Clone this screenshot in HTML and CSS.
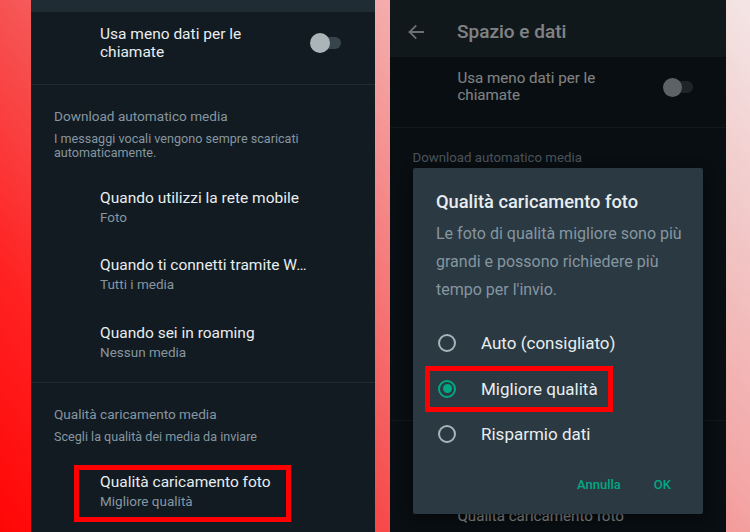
FILE: index.html
```html
<!DOCTYPE html>
<html lang="it">
<head>
<meta charset="utf-8">
<title>Spazio e dati</title>
<link rel="stylesheet" href="styles.css">
</head>
<body>
<div class="stage">
  <section class="phone phone-left">
    <div class="strip"></div>
    <div class="list">
      <div class="switch-row">
        <div class="switch-label">Usa meno dati per le chiamate</div>
        <div class="switch"><span class="switch-track"></span><span class="switch-knob"></span></div>
      </div>
      <div class="divider"></div>
      <div class="section-head">
        <div class="section-title">Download automatico media</div>
        <div class="section-desc">I messaggi vocali vengono sempre scaricati automaticamente.</div>
      </div>
      <div class="group">
        <div class="item"><div class="item-title">Quando utilizzi la rete mobile</div><div class="item-sub">Foto</div></div>
        <div class="item"><div class="item-title">Quando ti connetti tramite W…</div><div class="item-sub">Tutti i media</div></div>
        <div class="item"><div class="item-title">Quando sei in roaming</div><div class="item-sub">Nessun media</div></div>
      </div>
      <div class="divider"></div>
      <div class="section-head">
        <div class="section-title">Qualità caricamento media</div>
        <div class="section-desc">Scegli la qualità dei media da inviare</div>
      </div>
      <div class="item">
        <div class="item-title">Qualità caricamento foto</div><div class="item-sub">Migliore qualità</div>
        <span class="mark mark-item"></span>
      </div>
    </div>
  </section>

  <section class="phone phone-right">
    <header class="appbar">
      <svg class="back" viewBox="0 0 16 14" aria-hidden="true"><path d="M15.2 7H1.6M7.6 1L1.6 7l6 6" fill="none" stroke="currentColor" stroke-width="1.8" stroke-linecap="square"/></svg>
      <h1 class="appbar-title">Spazio e dati</h1>
    </header>
    <div class="list list-compact">
      <div class="switch-row">
        <div class="switch-label">Usa meno dati per le chiamate</div>
        <div class="switch"><span class="switch-track"></span><span class="switch-knob"></span></div>
      </div>
      <div class="divider"></div>
      <div class="section-head">
        <div class="section-title">Download automatico media</div>
        <div class="section-desc covered">I messaggi vocali vengono sempre scaricati automaticamente.</div>
      </div>
      <div class="group covered">
        <div class="item"><div class="item-title">Quando utilizzi la rete mobile</div><div class="item-sub">Foto</div></div>
        <div class="item"><div class="item-title">Quando ti connetti tramite W…</div><div class="item-sub">Tutti i media</div></div>
        <div class="item"><div class="item-title">Quando sei in roaming</div><div class="item-sub">Nessun media</div></div>
      </div>
      <div class="divider"></div>
      <div class="section-head covered">
        <div class="section-title">Qualità caricamento media</div>
        <div class="section-desc">Scegli la qualità dei media da inviare</div>
      </div>
      <div class="item"><div class="item-title">Qualità caricamento foto</div></div>
    </div>
    <div class="scrim"></div>
    <div class="dialog" role="dialog">
      <h2 class="dialog-title">Qualità caricamento foto</h2>
      <p class="dialog-text">Le foto di qualità migliore sono più grandi e possono richiedere più tempo per l'invio.</p>
      <div class="options">
        <div class="option"><span class="radio"></span><span>Auto (consigliato)</span></div>
        <div class="option"><span class="radio on"></span><span>Migliore qualità</span><span class="mark mark-option"></span></div>
        <div class="option"><span class="radio"></span><span>Risparmio dati</span></div>
      </div>
      <div class="actions"><span>Annulla</span><span>OK</span></div>
    </div>
  </section>
</div>
</body>
</html>
```
FILE: styles.css
```css
* { box-sizing: border-box; margin: 0; padding: 0; }
html, body { width: 750px; height: 532px; overflow: hidden; }
body {
  font-family: Roboto, "Noto Sans", sans-serif;
  background: linear-gradient(51deg, #ff0606 0%, #ff2222 18%, #f65252 36%, #f4a6a6 66%, #f2c4c4 82%, #f4e6e6 100%);
}
.stage { display: flex; height: 532px; padding-left: 31px; gap: 15px; }
.phone { position: relative; height: 532px; background: #121b22; overflow: hidden; color: #e9edef; }
.phone-left { width: 344px; }
.phone-right { width: 336px; }
.strip { height: 12px; background: #1f2c34; }

.list-compact { zoom: 0.977; }
.list-compact .group { padding-bottom: 8.5px; }
.covered { visibility: hidden; }

.switch-row { display: flex; align-items: center; justify-content: space-between; padding: 13px 34px 23px 69px; }
.switch-label { font-size: 15.5px; line-height: 18px; width: 180px; }
.switch { position: relative; width: 31px; height: 20px; flex: none; }
.switch-track { position: absolute; left: 3px; right: 0; top: 4px; height: 12px; border-radius: 6px; background: #37444c; }
.switch-knob { position: absolute; left: 0; top: 0; width: 20px; height: 20px; border-radius: 50%; background: #aab4b9; }

.divider { height: 1px; background: #1f2a31; }
.section-head { padding: 22.5px 23px 13px; color: #8696a0; }
.section-title { font-size: 13.6px; line-height: 16px; }
.section-desc { font-size: 12.6px; line-height: 14px; margin-top: 8px; width: 270px; }
.group { padding-bottom: 7px; }
.item { position: relative; padding: 15px 0 14.5px 69px; }
.item-title { font-size: 15.5px; line-height: 20px; white-space: nowrap; }
.item-sub { font-size: 13.5px; line-height: 18px; color: #8696a0; }

.mark { position: absolute; border: 5px solid #ff0000; }
.mark-item { left: 43px; top: 8.5px; width: 217px; height: 57px; }
.mark-option { left: 12px; top: 0; width: 188px; height: 46px; }

.appbar { display: flex; align-items: center; height: 57px; background: #1f2c34; padding: 6px 0 0 18px; }
.back { width: 16px; height: 14px; color: #c3cacf; flex: none; }
.appbar-title { margin-left: 33px; font-size: 19px; line-height: 24px; font-weight: 500; }

.scrim { position: absolute; inset: 0; background: rgba(0, 0, 0, 0.45); }

.dialog {
  position: absolute; left: 23px; top: 168px; width: 290px; height: 346px;
  background: #2a3942; border-radius: 2px; padding-top: 22px;
  box-shadow: 0 4px 14px rgba(0, 0, 0, 0.45);
}
.dialog-title { padding: 0 23px; font-size: 18.3px; line-height: 24px; font-weight: 500; color: #e9edef; }
.dialog-text { padding: 0 20px 0 23px; margin-top: 6.3px; font-size: 16px; line-height: 28px; color: #8696a0; }
.options { margin-top: 16.4px; }
.option { position: relative; display: flex; align-items: center; gap: 25px; height: 45.5px; padding-left: 25px; font-size: 17px; line-height: 20px; color: #e9edef; }
.radio { width: 18px; height: 18px; border: 2px solid #aab3b8; border-radius: 50%; display: flex; align-items: center; justify-content: center; flex: none; }
.radio.on { border-color: #00a884; }
.radio.on::after { content: ""; width: 9px; height: 9px; border-radius: 50%; background: #00a884; }
.actions { display: flex; justify-content: flex-end; gap: 33px; padding: 20px 32px 0 0; font-size: 13px; line-height: 16px; font-weight: 500; color: #00a884; }
```
